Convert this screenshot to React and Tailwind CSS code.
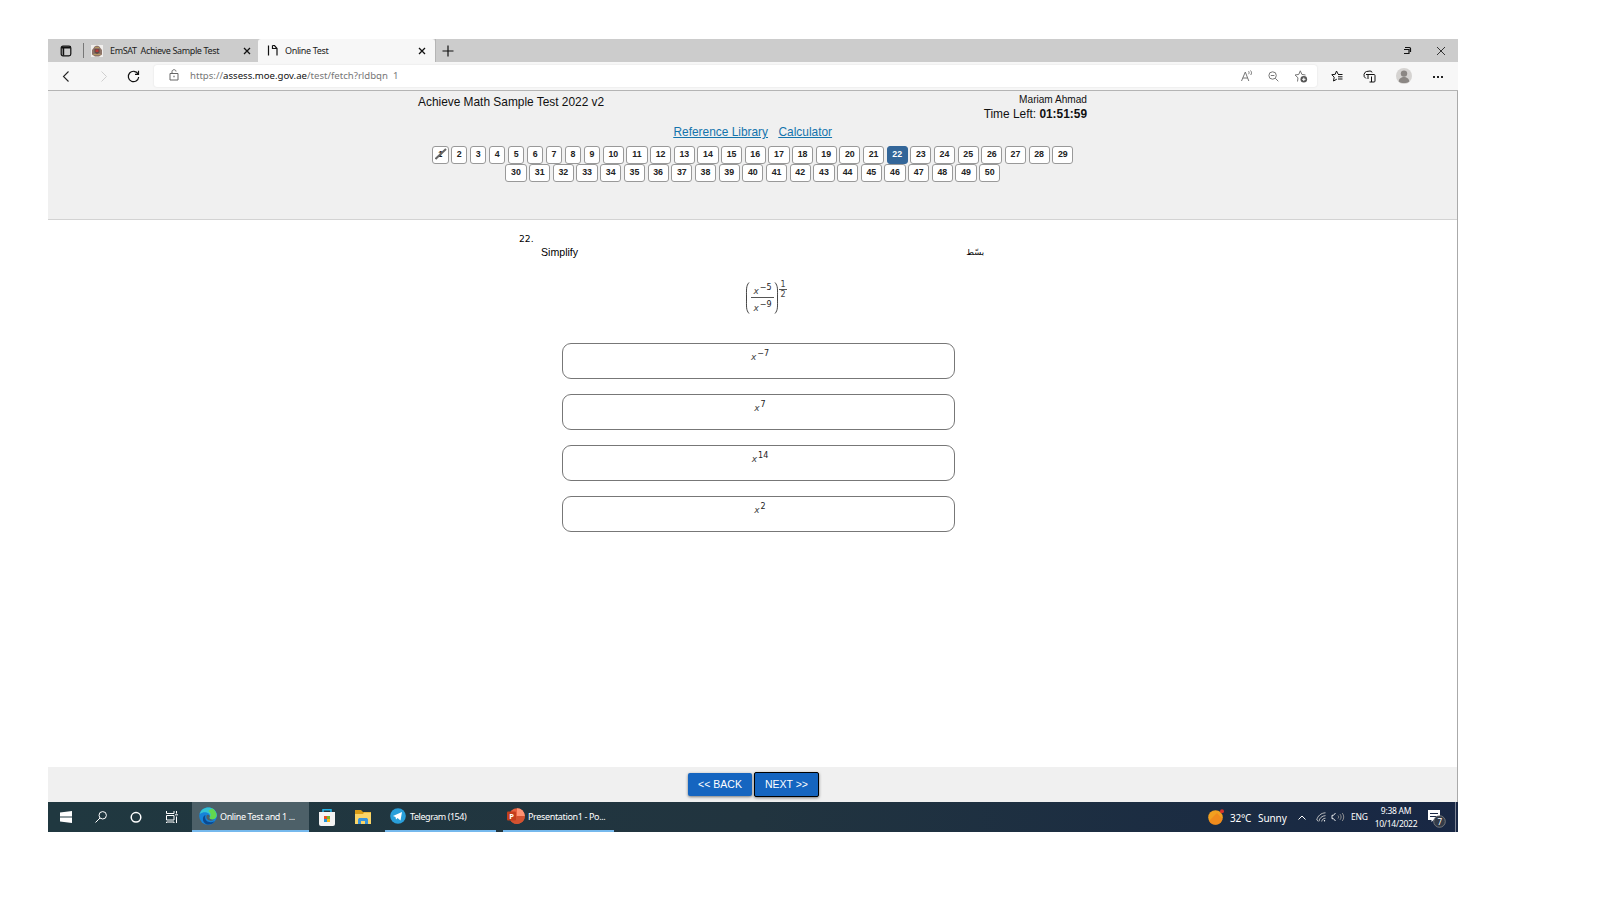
const singles = [1, 2, 3, 4, 5, 6, 7, 8, 9];
const doubles = Array.from({ length: 20 }, (_, i) => i + 10);
const secondRow = Array.from({ length: 21 }, (_, i) => i + 30);

const CloseIcon = ({ className }) => (
  <svg viewBox="0 0 8 8" className={className} fill="none" stroke="#111">
    <path d="M1 1l6 6M7 1L1 7" strokeWidth="1.3" />
  </svg>
);

const TabBar = () => (
  <div className="flex h-[23px] items-center bg-[#cccccc] text-[9px] text-[#1c1c1c]">
    <div className="flex w-[35px] items-center pl-3">
      <svg width="12" height="12" viewBox="0 0 12 12" fill="none" stroke="#111">
        <rect x="1.2" y="1.2" width="9.6" height="9.6" rx="1.8" strokeWidth="1.2" />
        <path d="M1.5 2.6h9M3.4 3v7.6" strokeWidth="1.6" />
      </svg>
    </div>
    <div className="h-[15px] w-px bg-[#777]" />
    <div className="flex w-[174px] items-center pl-[7px]">
      <svg width="12" height="12" viewBox="0 0 12 12">
        <rect width="12" height="12" fill="#f0eeec" />
        <path d="M3 2.5C3.5 0 8.5 0 9 2.5L11 5v4.5L8 11.5H4L1 9.5V5z" fill="#8d7468" />
        <path d="M3.5 4h5v3.5L6 9 3.5 7.5z" fill="#5f4a45" />
        <path d="M4.5 4.5h3V7h-3z" fill="#b93838" />
        <path d="M2.5 9.5h7M4 2.5h4" stroke="#b59a62" />
      </svg>
      <span className="ml-[7px] w-[133px] whitespace-pre tracking-[-0.37px]">EmSAT  Achieve Sample Test</span>
      <CloseIcon className="h-2 w-2" />
    </div>
    <div className="flex h-full w-[177px] items-center rounded-t-[3px] bg-[#f7f7f7] pl-[9px]">
      <svg width="11" height="13" viewBox="0 0 11 13" fill="none" stroke="#111" strokeWidth="1.2">
        <path d="M1.5 1.5v10M5.5 1.5h2l2.5 3v7M5.5 1.5v3h4" />
      </svg>
      <span className="ml-[7px] w-[133px] tracking-[-0.35px]">Online Test</span>
      <CloseIcon className="h-2 w-2" />
    </div>
    <div className="h-full w-px bg-[#b5b5b5]" />
    <svg className="ml-1.5" width="12" height="12" viewBox="0 0 12 12" stroke="#111" strokeWidth="1.2">
      <path d="M6 .5v11M.5 6h11" />
    </svg>
    <div className="mr-3 ml-auto flex items-center gap-6">
      <svg width="9" height="9" viewBox="0 0 9 9" fill="none" stroke="#111" strokeWidth="1.2">
        <path d="M2 1.500h4.500q1 0 1 1V6M1 3.500h5V7.500H1" />
      </svg>
      <svg width="10" height="10" viewBox="0 0 10 10" stroke="#222" strokeWidth="0.9">
        <path d="M1 1l8 8M9 1L1 9" />
      </svg>
    </div>
  </div>
);

const AddressBar = () => (
  <div className="flex h-[29px] items-center border-b border-[#b4b4b4] bg-[#f7f7f7]">
    <svg className="ml-3.5" width="8" height="11" viewBox="0 0 8 11" fill="none" stroke="#222" strokeWidth="1.1">
      <path d="M6.5 .5L1.500 5.500l5 5" />
    </svg>
    <svg className="ml-[30px]" width="8" height="11" viewBox="0 0 8 11" fill="none" stroke="#cfcfcf">
      <path d="M1.500 .5l5 5-5 5" />
    </svg>
    <svg className="ml-[19px]" width="13" height="13" viewBox="0 0 13 13" fill="none" stroke="#111" strokeWidth="1.2">
      <path d="M11 3.800A5.200 5.200 0 1 0 11.700 7M11.500 .8v3.500H8" />
    </svg>
    <div className="ml-3.5 flex h-[22px] w-[1163px] items-center rounded-[3px] bg-white shadow-[0_0_2px_#ddd]">
      <svg className="-mt-0.5 ml-[15px]" width="10" height="12" viewBox="0 0 10 12" fill="none" stroke="#666">
        <path d="M1 4.500h8v6.500H1zM3 4.500V2.700c0-2.600 4-2.600 4-.2" />
        <path d="M4.400 7.500h1.200" strokeWidth="1.300" />
      </svg>
      <span className="mt-px ml-[11px] whitespace-pre text-[9.6px] text-[#777]">
        https://<span className="text-[#111]">assess.moe.gov.ae</span>/test/fetch?rldbqn  1
      </span>
      <div className="mr-[9px] ml-auto flex items-center">
        <svg width="12" height="12" viewBox="0 0 12 12" fill="none" stroke="#777">
          <path d="M.5 11L4.300 2l3.500 9M1.800 8h5M7.500 1.200c.8.800.8 2 0 3M9.500 .5c1.300 1.500 1.300 3 .2 4.500" />
        </svg>
        <svg className="ml-[15px]" width="11" height="11" viewBox="0 0 11 11" fill="none" stroke="#777">
          <circle cx="4.600" cy="4.500" r="3.700" />
          <path d="M7.300 7.300l3 3M2.800 4.500h3.600" />
        </svg>
        <svg className="ml-[15px]" width="14" height="13" viewBox="0 0 14 13" fill="none" stroke="#777">
          <path d="M3.500 11.500l.5-3.700L1 5l3.800-.6L6.300 .8l1.600 3.600 3.600.6" />
          <circle cx="9.800" cy="9.300" r="3.300" fill="#555" stroke="none" />
          <path d="M9.800 7.600v3.400M8.100 9.300h3.400" stroke="#fff" />
        </svg>
      </div>
    </div>
    <svg className="ml-3.5" width="12" height="12" viewBox="0 0 12 12" fill="none" stroke="#111">
      <path d="M7 4L5.500 1 4.200 4.300.8 4.700 3.200 7.200 2.500 11 5.800 9.200M7 4.500h4.500M7 6.800h4.500M7 9h4.500" />
    </svg>
    <svg className="ml-5" width="13" height="13" viewBox="0 0 13 13" fill="none" stroke="#111">
      <path d="M3 8.500Q.5 7 1 4.500T3.500 1.500L7 1Q9 1 9 2.500" />
      <path d="M5 9V5.500Q5 4.500 6 4.500h5q1 0 1 1V11q0 1-1 1H6.500" />
      <path d="M8.500 6.500V12M3 4.500h3" />
    </svg>
    <svg className="ml-5" width="16" height="16" viewBox="0 0 16 16">
      <circle cx="8" cy="8" r="8" fill="#d5d3d1" />
      <circle cx="8" cy="5.600" r="3.200" fill="#8b8784" />
      <path d="M2.800 13.500c0-6 10.400-6 10.400 0-2 2-8.400 2-10.400 0z" fill="#8b8784" />
    </svg>
    <div className="mt-0.5 ml-[21px] flex gap-[2.500px]">
      <i className="h-[1.500px] w-[1.500px] bg-[#222]" />
      <i className="h-[1.500px] w-[1.500px] bg-[#222]" />
      <i className="h-[1.500px] w-[1.500px] bg-[#222]" />
    </div>
  </div>
);

const NumberButton = ({ n }) => {
  const width = n < 10 ? "w-[16.5px]" : "w-[21.2px]";
  const colors = n === 22 ? "border-[#336699] bg-[#336699] text-white" : "border-[#999] bg-white text-[#222]";
  return (
    <button
      className={`flex h-[18px] shrink-0 items-center justify-center rounded-[3px] border text-[8.8px] font-bold ${width} ${colors}`}
    >
      {n === 1 ? (
        <span className="relative italic">
          1
          <svg className="absolute top-0 -left-[3px]" width="12" height="12" viewBox="0 0 12 12">
            <path d="M.5 11L11 1" stroke="#666" strokeWidth="2" />
          </svg>
        </span>
      ) : (
        n
      )}
    </button>
  );
};

const TestHeader = () => (
  <header className="h-[129px] border-b border-[#d3d3d3] bg-[#f0f0f0] font-['Liberation_Sans',Arial,sans-serif] text-[11.9px] text-[#111]">
    <div className="flex h-[34px] pl-[370px]">
      <h1 className="w-[400px] pt-[3px] leading-4">Achieve Math Sample Test 2022 v2</h1>
      <div className="w-[269px] pt-[2px] text-right">
        <div className="text-[10.1px] leading-[13px]">Mariam Ahmad</div>
        <div className="leading-4">
          Time Left: <b>01:51:59</b>
        </div>
      </div>
    </div>
    <div className="flex h-[21px] gap-[10.500px] pl-[625.500px] leading-[14px] text-[#1474ad] underline">
      <a>Reference Library</a>
      <a>Calculator</a>
    </div>
    <div className="flex gap-[2.47px] pl-[384px]">
      {[...singles, ...doubles].map((n) => (
        <NumberButton key={n} n={n} />
      ))}
    </div>
    <div className="flex gap-[2.5px] pl-[457.4px]">
      {secondRow.map((n) => (
        <NumberButton key={n} n={n} />
      ))}
    </div>
  </header>
);

const Power = ({ exp, className = "" }) => (
  <span className={`flex items-start text-[9px] leading-none text-[#444] ${className}`}>
    <i className="pt-[3px]">x</i>
    <span className="ml-[1px] text-[8px] whitespace-nowrap text-[#222]">{exp}</span>
  </span>
);

const Formula = () => (
  <div className="flex h-[33px] pl-[697px] text-[#444]">
    <svg className="mt-px" width="5" height="32" viewBox="0 0 5 32" fill="none" stroke="#444">
      <path d="M4 .5C1 4 1.500 7 1.500 16S1 28 4 31.500" />
    </svg>
    <div className="ml-px flex w-[23px] flex-col items-center">
      <Power exp="−5" className="h-[16px] pt-[3px]" />
      <div className="h-px w-full bg-[#555]" />
      <Power exp="−9" className="pt-[3px]" />
    </div>
    <svg className="mt-px" width="5" height="32" viewBox="0 0 5 32" fill="none" stroke="#444">
      <path d="M1 .5C4 4 3.500 7 3.500 16S4 28 1 31.500" />
    </svg>
    <div className="flex w-2 flex-col items-center text-[8px] leading-[8px]">
      <span>1</span>
      <div className="h-px w-full shrink-0 bg-[#555]" />
      <span className="pt-px">2</span>
    </div>
  </div>
);

const Question = () => (
  <main className="h-[547px] bg-white pt-[13px] font-['DejaVu_Sans',Verdana,sans-serif]">
    <div className="h-[13px] pl-[471px] text-[9.2px] leading-[12px] text-black">22.</div>
    <div className="flex h-[35px] w-[936px] justify-between pl-[493px] font-['Liberation_Sans',Arial,sans-serif] text-[10.6px] leading-[13px] text-black">
      <span>Simplify</span>
      <span lang="ar" dir="rtl" className="font-['DejaVu_Sans',sans-serif] text-[8.4px]">بسّط</span>
    </div>
    <Formula />
    <div className="mt-[29px] ml-[514px] flex w-[393px] flex-col gap-[15px]">
      {["−7", "7", "14", "2"].map((exp) => (
        <button key={exp} className="flex h-9 justify-center rounded-[9px] border border-[#777] pt-[6px] pl-[3px]">
          <Power exp={exp} />
        </button>
      ))}
    </div>
  </main>
);

const Footer = () => (
  <footer className="flex h-[35px] items-center gap-[2px] bg-[#f0f0f0] pl-[640px] font-['Liberation_Sans',Arial,sans-serif] text-[10.5px] text-white">
    <button className="h-[23px] w-16 rounded-[2px] bg-[#1565c0] shadow-[0_1px_3px_#777]">&lt;&lt; BACK</button>
    <button className="h-[25px] w-[65px] rounded-[2px] border border-black bg-[#1565c0] shadow-[0_1px_3px_#777]">
      NEXT &gt;&gt;
    </button>
  </footer>
);

const Taskbar = () => (
  <div className="flex h-[30px] items-center bg-linear-to-r from-[#203840] via-[#21343f] to-[#182744] text-[9px] text-white">
    <div className="flex w-36 items-center pl-3">
      <svg width="12" height="12" viewBox="0 0 12 12" fill="#fff">
        <path d="M0 1.500L12 0v5.500H0zM0 6.500h12V12L0 10.500z" />
      </svg>
      <svg className="ml-[23px]" width="12" height="12" viewBox="0 0 12 12" fill="none" stroke="#fff">
        <circle cx="7.700" cy="4.300" r="3.700" />
        <path d="M5 7L.5 11.500" />
      </svg>
      <svg className="ml-[23px]" width="12" height="12" viewBox="0 0 12 12" fill="none" stroke="#fff" strokeWidth="1.5">
        <circle cx="6" cy="6.300" r="4.800" />
      </svg>
      <svg className="ml-6" width="13" height="12" viewBox="0 0 13 12" fill="none" stroke="#fff">
        <path d="M.5 0v2.500h7.500V0M.5 4.500h7.500v4.500H.5zM.5 12v-1h7.500v1M10.500 0v2.500M10.500 5.500V12M9 3.800h3" />
      </svg>
    </div>
    <div className="flex h-full w-[117px] items-center border-b-2 border-[#76b9ed] bg-[#4d6068] pl-[7px]">
      <svg width="18" height="18" viewBox="0 0 18 18">
        <circle cx="9" cy="9" r="8.800" fill="#1683d8" />
        <path d="M.8 7C3-2 17-1.500 17.800 8c0 5-6 5-7.500 3 3-4-4-8-9.500-4z" fill="#35c4d3" />
        <path d="M13 1.500C18 4 19 10 15 12c-2 1-4 .2-4.700-1 2-2.500 2-5-1-7z" fill="#62d84f" />
        <path d="M6.500 8c-2 6 4 9 9.500 6-4 6-13 4-12-3 .3-1.500 1-2.500 2.500-3z" fill="#0b4a91" />
        <path d="M7.500 8.500c1.500-1.800 4.300 0 2.800 2.500.7 1.500 3 2 5 1.500-3 2.500-9 1-7.800-4z" fill="#4d6068" />
      </svg>
      <span className="mt-px ml-[3px] tracking-[-0.38px] whitespace-nowrap">Online Test and 1 ...</span>
    </div>
    <svg className="ml-2.5" width="16" height="17" viewBox="0 0 16 17">
      <path d="M4 4V.8h8V4" fill="none" stroke="#25b5e8" strokeWidth="1.5" />
      <path d="M0 3h16v12a2 2 0 0 1-2 2H2a2 2 0 0 1-2-2z" fill="#f3f3f3" />
      <path d="M5 7h3v3H5z" fill="#f04e23" />
      <path d="M8 7h3v3H8z" fill="#78b829" />
      <path d="M5 10h3v3H5z" fill="#2296dc" />
      <path d="M8 10h3v3H8z" fill="#f8b818" />
    </svg>
    <svg className="ml-5" width="16" height="14" viewBox="0 0 16 14">
      <path d="M0 0h6l2 2h8v12H0z" fill="#d99c16" />
      <path d="M0 4h8l1-1.500h7V14H0z" fill="#fbd567" />
      <path d="M3 14V9.500L4 8h8l1 1.500V14h-3v-3H6v3z" fill="#3994dc" />
    </svg>
    <div className="ml-3.5 flex h-full w-[111px] items-center border-b-2 border-[#76b9ed] pl-[5px]">
      <svg width="16" height="16" viewBox="0 0 16 16">
        <circle cx="8" cy="8" r="7.800" fill="#299fda" />
        <path d="M3 8l9-4-1.500 8.500L7.500 10 6 11.500 5.500 9z" fill="#fff" />
      </svg>
      <span className="mt-px ml-1 tracking-[-0.45px]">Telegram (154)</span>
    </div>
    <div className="ml-[7px] flex h-full w-[111px] items-center border-b-2 border-[#76b9ed] pl-1">
      <svg width="18" height="16" viewBox="0 0 18 16">
        <circle cx="10" cy="8" r="7.800" fill="#e8613f" />
        <path d="M10 .2A7.800 7.800 0 0 1 17.800 8H10z" fill="#ff9272" />
        <path d="M17.800 8A7.800 7.800 0 0 1 3 11.500L10 8z" fill="#d35230" />
        <rect y="3.500" width="9" height="9" rx="1" fill="#c43e1c" />
        <text x="2.200" y="10.800" fill="#fff" fontSize="7.500" fontWeight="700">P</text>
      </svg>
      <span className="mt-px ml-[3px] tracking-[-0.35px] whitespace-nowrap">Presentation1 - Po...</span>
    </div>
    <div className="ml-auto flex h-full items-center">
      <svg width="16" height="16" viewBox="0 0 16 16">
        <circle cx="7.500" cy="8.500" r="7.300" fill="#f2a020" />
        <path d="M1 12A7.300 7.300 0 0 0 14.500 10L9 4z" fill="#f07d1b" opacity=".6" />
        <circle cx="14" cy="2.300" r="2" fill="#d6332a" />
      </svg>
      <span className="mt-0.5 ml-1.5 w-7 text-[10px] tracking-[-0.2px]">32°C</span>
      <span className="mt-0.5 w-[40px] text-[10px] tracking-[-0.1px]">Sunny</span>
      <svg width="8" height="5" viewBox="0 0 8 5" fill="none" stroke="#fff">
        <path d="M.5 4.500L4 1l3.500 3.500" />
      </svg>
      <svg className="ml-2.5" width="10" height="10" viewBox="0 0 10 10" fill="none" stroke="#ccc" strokeWidth=".9">
        <path d="M.8 8C1.500 4 5 1 9.500 .8M3 9.300c.3-3.200 3-5.500 6.500-5.700M5.700 9.500c.2-2 1.800-3.200 3.800-3.300M.8 8l1.500 1.300" />
        <circle cx="8.500" cy="8.800" r=".7" fill="#fff" stroke="none" />
      </svg>
      <svg className="ml-[5px]" width="14" height="10" viewBox="0 0 14 10" fill="none" stroke="#fff" strokeWidth=".9">
        <path d="M4.500 1L2.500 3.300H1v3.400h1.500L4.500 9" />
        <path d="M7 3.500c.8 1 .8 2 0 3M9 2.200c1.500 2 1.500 3.600 0 5.600M11.200 1c2 2.500 2 5.500 0 8" stroke="#999" />
      </svg>
      <span className="ml-[6px] w-[23px] text-[8.5px] tracking-[-0.2px]">ENG</span>
      <div className="w-[44px] text-center text-[8.5px] leading-[13px] tracking-[-0.25px]">
        <div>9:38 AM</div>
        <div>10/14/2022</div>
      </div>
      <svg className="mt-1 mr-2 ml-[10px]" width="19" height="19" viewBox="0 0 19 19">
        <path d="M0 0h12v10H5.500L3.500 12v-2H0z" fill="#fff" />
        <path d="M2 3.500h8M2 6.500h8" stroke="#1b2945" />
        <circle cx="11.500" cy="11.500" r="5.800" fill="#333b48" stroke="#888" strokeWidth=".8" />
        <text x="9.500" y="14.500" fill="#fff" fontSize="8">7</text>
      </svg>
      <div className="mr-0.5 h-full w-px bg-[#7c8494]" />
    </div>
  </div>
);

const App = () => {
  return (
    <div className="h-[900px] w-[1600px] overflow-hidden bg-white pt-[39px] pl-12 font-['Noto_Sans','Open_Sans',sans-serif]">
      <div className="w-[1410px]">
        <TabBar />
        <AddressBar />
        <div className="border-r border-[#aaa]">
          <TestHeader />
          <Question />
          <Footer />
        </div>
        <Taskbar />
      </div>
    </div>
  );
};

export default App;
